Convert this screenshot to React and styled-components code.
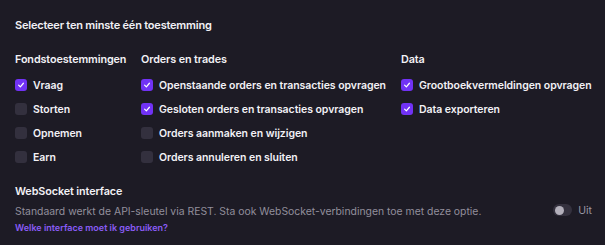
import styled, { createGlobalStyle } from 'styled-components'

const GlobalStyle = createGlobalStyle`
  html, body {
    margin: 0;
    padding: 0;
    background: #1d1b25;
  }
  * { box-sizing: border-box; }
`

const Panel = styled.div`
  width: 605px;
  height: 245px;
  background: #1d1b25;
  color: #f2f1f5;
  font-family: Inter, 'Noto Sans', sans-serif;
  padding: 17px 13px 0 15px;
`

const Title = styled.h2`
  margin: 0;
  font-size: 11px;
  font-weight: 600;
  line-height: 16px;
  letter-spacing: -0.2px;
`

const Columns = styled.div`
  display: grid;
  grid-template-columns: 126px 260px 1fr;
  margin-top: 19px;
`

const Column = styled.div`
  display: flex;
  flex-direction: column;
`

const ColumnTitle = styled.h3`
  margin: 0 0 5px;
  font-size: 10.8px;
  font-weight: 600;
  line-height: 16px;
  letter-spacing: -0.1px;
`

const Option = styled.label`
  display: flex;
  align-items: center;
  gap: 6px;
  height: 24px;
  font-size: 10.5px;
  font-weight: 600;
  letter-spacing: -0.05px;
`

const Box = styled.span`
  flex: none;
  width: 12px;
  height: 12px;
  border-radius: 3px;
  display: flex;
  align-items: center;
  justify-content: center;
  background: ${(p) => (p.checked ? '#7132f5' : '#33303e')};
`

const Section = styled.div`
  margin-top: 15px;
`

const SectionTitle = styled.h3`
  margin: 0;
  font-size: 10.8px;
  font-weight: 600;
  line-height: 16px;
  letter-spacing: -0.1px;
`

const Row = styled.div`
  display: flex;
  align-items: flex-start;
  justify-content: space-between;
  margin-top: 4px;
`

const Description = styled.p`
  margin: 0;
  font-size: 10.4px;
  line-height: 16px;
  color: #928f9c;
`

const Link = styled.a`
  display: block;
  font-size: 9px;
  font-weight: 600;
  line-height: 16px;
  color: #8a5cf6;
  text-decoration: none;
`

const Toggle = styled.div`
  display: flex;
  align-items: center;
  gap: 6px;
  height: 12px;
  font-size: 10.5px;
  color: #9a97a3;
`

const Track = styled.span`
  width: 19px;
  height: 12px;
  border-radius: 6px;
  background: #34313e;
  position: relative;
`

const Knob = styled.span`
  position: absolute;
  left: 1.5px;
  top: 1.5px;
  width: 9px;
  height: 9px;
  border-radius: 50%;
  background: #b3b0bb;
`

const Check = () => (
  <svg width="8" height="8" viewBox="0 0 10 10" fill="none">
    <path d="M2 5.2 L4.2 7.3 L8 2.8" stroke="#fff" strokeWidth="1.5" strokeLinecap="round" strokeLinejoin="round" />
  </svg>
)

const groups = [
  {
    title: 'Fondstoestemmingen',
    items: [
      ['Vraag', true],
      ['Storten', false],
      ['Opnemen', false],
      ['Earn', false],
    ],
  },
  {
    title: 'Orders en trades',
    items: [
      ['Openstaande orders en transacties opvragen', true],
      ['Gesloten orders en transacties opvragen', true],
      ['Orders aanmaken en wijzigen', false],
      ['Orders annuleren en sluiten', false],
    ],
  },
  {
    title: 'Data',
    items: [
      ['Grootboekvermeldingen opvragen', true],
      ['Data exporteren', true],
    ],
  },
]

export default function App() {
  return (
    <>
      <GlobalStyle />
      <Panel>
        <Title>Selecteer ten minste één toestemming</Title>
        <Columns>
          {groups.map((g) => (
            <Column key={g.title}>
              <ColumnTitle>{g.title}</ColumnTitle>
              {g.items.map(([label, checked]) => (
                <Option key={label}>
                  <Box checked={checked}>{checked && <Check />}</Box>
                  {label}
                </Option>
              ))}
            </Column>
          ))}
        </Columns>
        <Section>
          <SectionTitle>WebSocket interface</SectionTitle>
          <Row>
            <div>
              <Description>
                Standaard werkt de API-sleutel via REST. Sta ook WebSocket-verbindingen toe met deze optie.
              </Description>
              <Link href="#">Welke interface moet ik gebruiken?</Link>
            </div>
            <Toggle>
              <Track>
                <Knob />
              </Track>
              Uit
            </Toggle>
          </Row>
        </Section>
      </Panel>
    </>
  )
}
